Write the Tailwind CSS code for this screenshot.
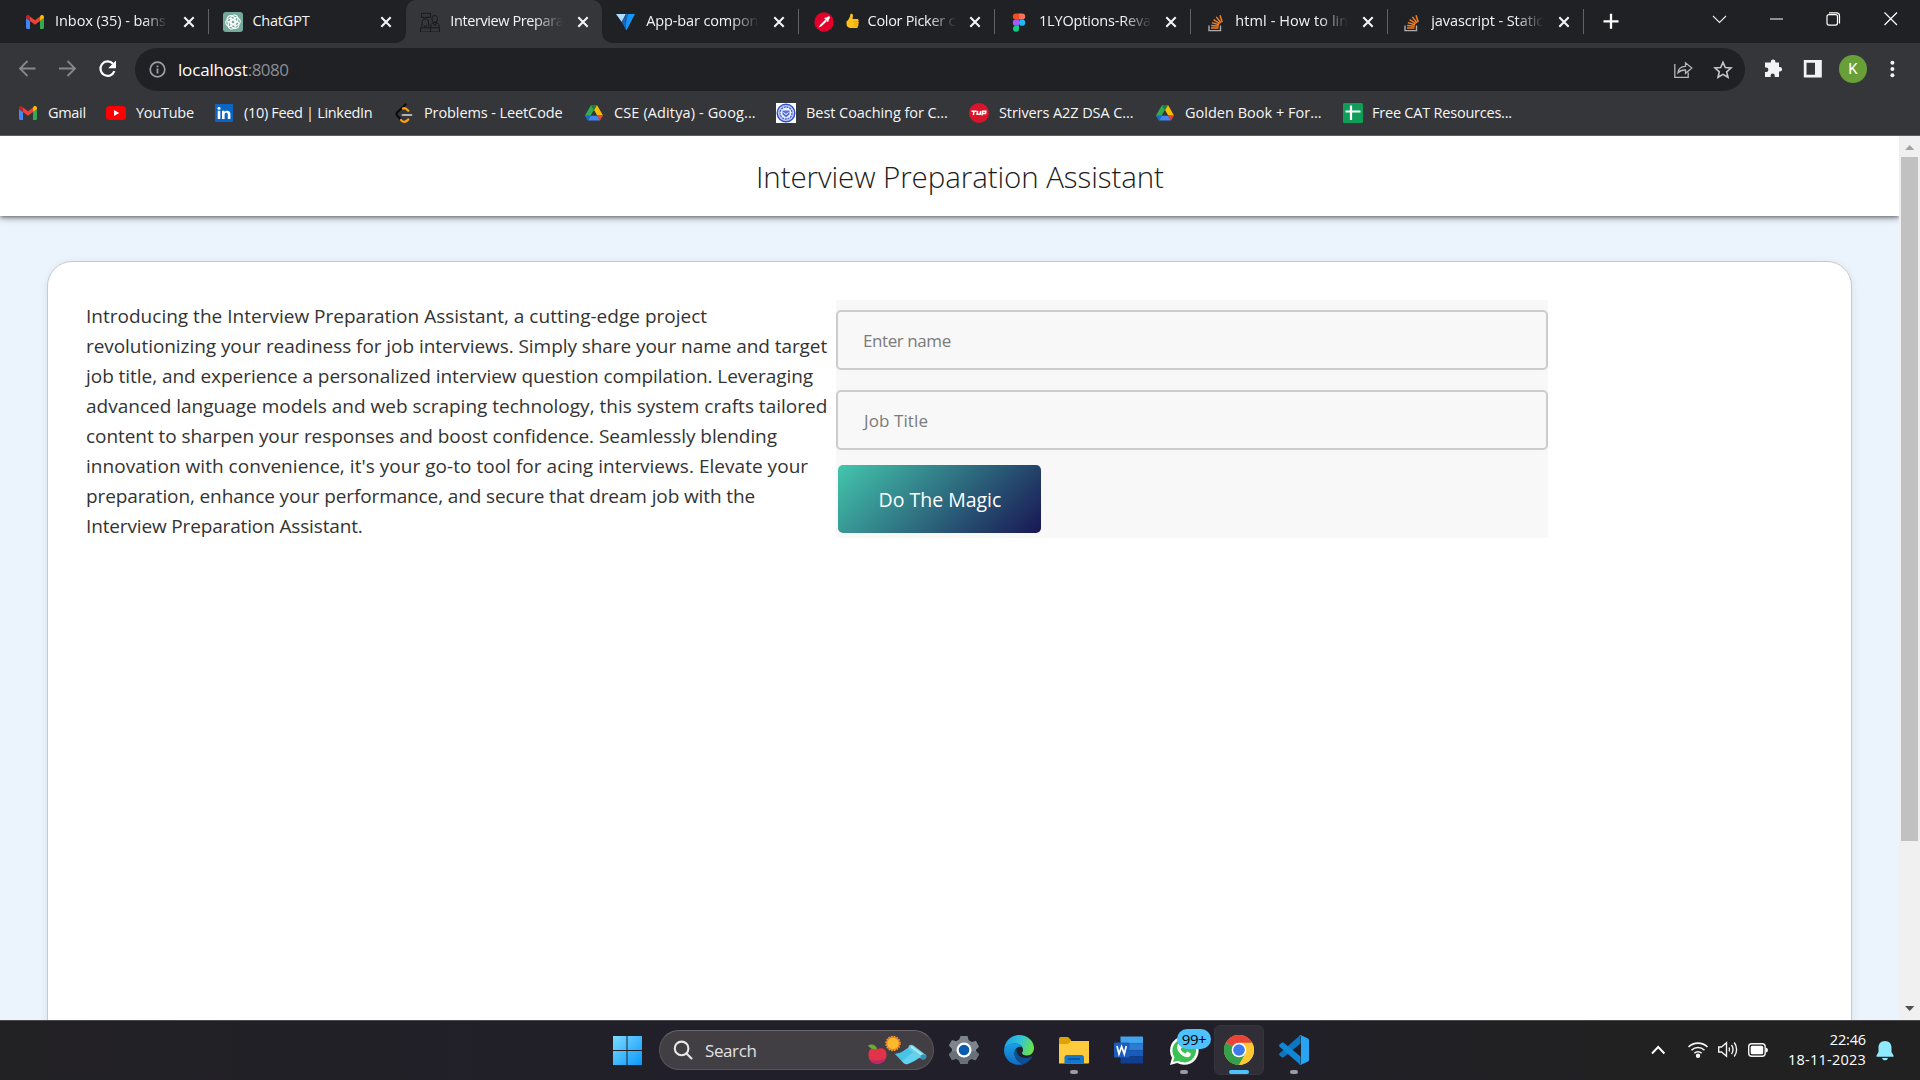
<!DOCTYPE html>
<html lang="en">
<head>
<meta charset="utf-8">
<title>Interview Preparation Assistant</title>
<script src="https://cdn.jsdelivr.net/npm/@tailwindcss/browser@4"></script>
</head>
<body class="w-[1920px] h-[1080px] overflow-hidden flex flex-col bg-white font-['Open_Sans','Noto_Sans',sans-serif]">
<svg class="hidden">
  <defs>
    <symbol id="close" viewBox="0 0 20 20"><path d="M5.300 5.300l9.400 9.400M14.700 5.300l-9.400 9.400" stroke="#f1f3f4" stroke-width="2.100" fill="none"/></symbol>
    <symbol id="gmail" viewBox="0 0 20 20"><path d="M1 6v9.500c0 .8.6 1.500 1.400 1.500H5V9z" fill="#4285f4"/><path d="M15 17h2.600c.8 0 1.400-.7 1.400-1.500V6l-4 3z" fill="#34a853"/><path d="M15 4.500V9l4-3V5c0-1.800-2-2.700-3.300-1.600z" fill="#fbbc04"/><path d="M5 9V4.500L10 8.300l5-3.800V9l-5 3.800z" fill="#ea4335"/><path d="M1 5v1l4 3V4.500l-.7-.9C3 2.500 1 3.300 1 5z" fill="#c5221f"/></symbol>
    <symbol id="drive" viewBox="0 0 20 20"><path d="M7 2h6l-3 5.200z" fill="#188038"/><path d="M7 2L1 12.500l3 5 6-10.300z" fill="#34a853"/><path d="M13 2l6 10.500h-6L10 7.200z" fill="#fbbc04"/><path d="M7 12.500h6L16 17.500H4z" fill="#4285f4"/><path d="M13 12.500h6l-3 5z" fill="#ea4335"/><path d="M7 12.500H1l3 5z" fill="#1967d2"/><path d="M10 7.200l3.100 5.300H6.900z" fill="#35363a"/></symbol>
    <symbol id="stack" viewBox="0 0 20 20"><path d="M4 13.500v5.100h11.500v-5.100" fill="none" stroke="#a9adb0" stroke-width="1.400"/><path d="M6 16h7.500M6.200 13.400l7.400.8M6.900 10.600l7.100 2.100M8.600 7.600l6.300 4M11.300 4.900l4.700 5.900M15 3.200l2.200 6.800" stroke="#f48024" stroke-width="1.500" fill="none"/></symbol>
  </defs>
</svg>

<!-- Tab strip -->
<header class="h-[43px] shrink-0 bg-[#202124] flex text-[14.500px] text-[#f1f3f4] pl-[13px]">
  <div class="w-[196.400px] flex items-center pl-3 shrink-0">
    <svg class="size-5 shrink-0"><use href="#gmail"/></svg>
    <div class="w-[114px] ml-[10px] -mt-0.5 overflow-hidden whitespace-nowrap mask-[linear-gradient(to_right,black_78%,transparent_99%)]"><span class="tracking-[-0.06px]">Inbox (35) - bans</span></div>
    <svg class="size-5 ml-[10px] shrink-0"><use href="#close"/></svg>
    <i class="w-px h-[25px] bg-[#5f6368] ml-auto"></i>
  </div>
  <div class="w-[196.400px] flex items-center pl-[13.500px] shrink-0">
    <svg class="size-5 shrink-0" viewBox="0 0 20 20"><rect width="20" height="20" rx="3" fill="#74aa9c"/><g fill="none" stroke="#fff" stroke-width="1.100"><path id="petal" d="M10 3.200c2.500-.9 4.800.8 4.800 3.200v3.300l-4.700 2.700-2.400-1.400V5.800c0-1.200 1-2.200 2.300-2.600z"/><use href="#petal" transform="rotate(60 10 10)"/><use href="#petal" transform="rotate(120 10 10)"/><use href="#petal" transform="rotate(180 10 10)"/><use href="#petal" transform="rotate(240 10 10)"/><use href="#petal" transform="rotate(300 10 10)"/></g></svg>
    <div class="w-[114px] ml-[9.500px] -mt-0.5 overflow-hidden whitespace-nowrap"><span class="tracking-[-0.200px]">ChatGPT</span></div>
    <svg class="size-5 ml-[9.500px] shrink-0"><use href="#close"/></svg>
  </div>
  <div class="w-[196.400px] flex items-center pl-[14.500px] shrink-0 bg-[#35363a] rounded-t-[10px] relative">
    <svg class="absolute -left-[10px] bottom-0 size-[10px]" viewBox="0 0 10 10"><path d="M10 0v10H0A10 10 0 0 0 10 0" fill="#35363a"/></svg>
    <svg class="absolute -right-[10px] bottom-0 size-[10px]" viewBox="0 0 10 10"><path d="M0 0v10h10A10 10 0 0 1 0 0" fill="#35363a"/></svg>
    <svg class="size-5 shrink-0" viewBox="0 0 20 20" fill="none" stroke="#17181a" stroke-width="1"><path d="M1.500 1.300h9v4H5.500L4 6.500 3.500 5.300h-2zM.5 20v-4.200h19V20zM10.500 15.800V20M2 15.500c-1-1 .2-3.500.2-5.500 0-2 1.300-3.200 3-3.200s3.200 1.200 3.200 3.200.9 4.500 0 5.500M12 6.800c0-2 1-3.300 2.800-3.300s2.700 1.300 2.700 3.300-1 3.200-2.700 3.200-2.800-1.200-2.800-3.200zM11 15.500v-3c1-1.500 2.300-2 3.800-2s3.200.5 4.200 2v3M13 11l1.800 3 1.700-3M3.500 13l1.700 2L7 13"/></svg>
    <div class="w-[114px] ml-[10px] -mt-0.5 overflow-hidden whitespace-nowrap mask-[linear-gradient(to_right,black_74%,transparent_99%)]"><span class="tracking-[-0.400px]">Interview Prepara</span></div>
    <svg class="size-5 ml-[8.500px] shrink-0"><use href="#close"/></svg>
  </div>
  <div class="w-[196.400px] flex items-center pl-[14px] shrink-0">
    <svg class="size-5 shrink-0" viewBox="0 0 20 20"><path d="M0 2h9.800L5.700 10z" fill="#aeddff"/><path d="M5.700 10L9.800 3v14.700z" fill="#1867c0"/><path d="M10.500 2H19l-8.200 15.700H9.800V12z" fill="#1697f6"/><path d="M10.500 2h1.700L9.800 13V3z" fill="#1867c0"/></svg>
    <div class="w-[114px] ml-[10px] -mt-0.5 overflow-hidden whitespace-nowrap mask-[linear-gradient(to_right,black_74%,transparent_99%)]"><span class="tracking-[-0.120px]">App-bar compon</span></div>
    <svg class="size-5 ml-[8.500px] shrink-0"><use href="#close"/></svg>
    <i class="w-px h-[25px] bg-[#5f6368] ml-auto"></i>
  </div>
  <div class="w-[196.400px] flex items-center pl-[15px] shrink-0">
    <svg class="size-5 shrink-0" viewBox="0 0 20 20"><g transform="translate(0 .3)"><circle cx="10" cy="9.700" r="9.700" fill="#e4002b"/><path d="M12 5.500l2.300-1.400c1.300-.4 2 .6 1.500 1.700L14.500 8l.3.900-1 .7-3.500-3.400.8-.9z" fill="#fff"/><path d="M11.200 7.400l1.600 1.600-5.300 5-2.800 1.300 1.300-2.700z" fill="#fff"/></g></svg>
    <div class="w-[114px] ml-[12px] -mt-0.5 overflow-hidden whitespace-nowrap flex items-center mask-[linear-gradient(to_right,black_72%,transparent_97%)]">
      <svg class="w-[13px] h-4 mr-[9px] shrink-0" viewBox="0 0 13 16"><path d="M.5 8.500C2.500 7 4 4.500 4.300 1.500 4.500 0 7 .5 7 2.500L6.600 6H11c2 0 2 2 1 2.500 1.200.5 1 2 0 2.400.9.600.6 1.900-.3 2.200.5 1-.2 2-1.200 2H5C2.500 15 .5 13.500.5 11z" fill="#fcc21b"/><path d="M7.500 8.500H12M7.500 10.900H12M7.500 13.100h4" stroke="#e59600" stroke-width=".7"/></svg>
      <span class="tracking-[-0.300px]">Color Picker c</span></div>
    <svg class="size-5 ml-[5px] shrink-0"><use href="#close"/></svg>
    <i class="w-px h-[25px] bg-[#5f6368] ml-auto"></i>
  </div>
  <div class="w-[196.400px] flex items-center pl-[14px] shrink-0">
    <svg class="size-5 shrink-0" viewBox="0 0 20 20"><g transform="translate(0 .6)"><path d="M10 .8H6.900a3.100 3.100 0 0 0 0 6.200H10z" fill="#f24e1e"/><path d="M10 .8h3.100a3.100 3.100 0 0 1 0 6.200H10z" fill="#ff7262"/><path d="M10 7H6.900a3.100 3.100 0 0 0 0 6.200H10z" fill="#a259ff"/><circle cx="13.100" cy="10.100" r="3.100" fill="#1abcfe"/><path d="M10 13.200H6.900a3 3 0 1 0 3.100 2.600z" fill="#0acf83"/></g></svg>
    <div class="w-[114px] ml-[10px] -mt-0.5 overflow-hidden whitespace-nowrap mask-[linear-gradient(to_right,black_74%,transparent_99%)]"><span class="tracking-[-0.170px]">1LYOptions-Reva</span></div>
    <svg class="size-5 ml-[8px] shrink-0"><use href="#close"/></svg>
    <i class="w-px h-[25px] bg-[#5f6368] ml-auto"></i>
  </div>
  <div class="w-[196.400px] flex items-center pl-[14px] shrink-0">
    <svg class="size-5 shrink-0"><use href="#stack"/></svg>
    <div class="w-[114px] ml-[10px] -mt-0.5 overflow-hidden whitespace-nowrap mask-[linear-gradient(to_right,black_74%,transparent_99%)]"><span class="tracking-[0.080px]">html - How to lin</span></div>
    <svg class="size-5 ml-[8.500px] shrink-0"><use href="#close"/></svg>
    <i class="w-px h-[25px] bg-[#5f6368] ml-auto"></i>
  </div>
  <div class="w-[196.400px] flex items-center pl-[13.500px] shrink-0">
    <svg class="size-5 shrink-0"><use href="#stack"/></svg>
    <div class="w-[114px] ml-[10px] -mt-0.5 overflow-hidden whitespace-nowrap mask-[linear-gradient(to_right,black_74%,transparent_99%)]"><span class="tracking-[-0.090px]">javascript - Static</span></div>
    <svg class="size-5 ml-[8.500px] shrink-0"><use href="#close"/></svg>
    <i class="w-px h-[25px] bg-[#5f6368] ml-auto"></i>
  </div>
  <svg class="size-5 ml-[17px] mt-[11px]" viewBox="0 0 20 20" stroke="#fff" stroke-width="2.300"><path d="M2.500 10.300h15M10 2.800v15"/></svg>
  <div class="ml-auto mr-px flex h-[37px] items-center">
    <svg class="w-[57px] h-5" viewBox="0 0 57 20" fill="none" stroke="#e8eaed" stroke-width="1.100"><path d="M22 7l6.500 6.500L35 7"/></svg>
    <svg class="w-[57px] h-5" viewBox="0 0 57 20" stroke="#fff" stroke-width="1"><path d="M22 10h13"/></svg>
    <svg class="w-[57px] h-5" viewBox="0 0 57 20" fill="none" stroke="#fff" stroke-width="1.200"><rect x="22" y="5.600" width="10.500" height="10.500" rx="2"/><path d="M24 3.900h7.500a3 3 0 0 1 3 3v7.500"/></svg>
    <svg class="w-[57px] h-5" viewBox="0 0 57 20" stroke="#fff" stroke-width="1.200"><path d="M22.500 3.500l12.500 12.500M35 3.500L22.500 16"/></svg>
  </div>
</header>

<!-- Toolbar -->
<div class="h-12 pt-[5px] shrink-0 bg-[#35363a] flex items-start">
  <div class="flex items-center h-[42px] w-[135px] pl-[17px] gap-5">
    <svg class="size-5" viewBox="0 0 20 20" fill="none" stroke="#86888a" stroke-width="1.800"><path d="M18.500 9.500H3M10.500 2L3 9.500l7.500 7.500"/></svg>
    <svg class="size-5" viewBox="0 0 20 20" fill="none" stroke="#86888a" stroke-width="1.800"><path d="M2 9.500h15.500M10.500 2l7.500 7.500-7.500 7.500"/></svg>
    <svg class="size-5" viewBox="0 0 20 20"><path d="M16 4.800A7.200 7.200 0 1 0 17.400 12.200" fill="none" stroke="#fff" stroke-width="2.200"/><path d="M19 1.500v7.800h-7.800z" fill="#fff"/></svg>
  </div>
  <div class="h-[43px] w-[1610px] rounded-full bg-[#202124] flex items-center pl-[14px] pr-[12px]">
    <svg class="size-[17px]" viewBox="0 0 17 17"><circle cx="8.500" cy="8.500" r="7.300" fill="none" stroke="#9aa0a6" stroke-width="1.700"/><path d="M7.600 7.500h1.800v5H7.600zM7.600 4.400h1.800v1.800H7.600z" fill="#9aa0a6"/></svg>
    <div class="ml-[12px] text-[17px] leading-[22px] whitespace-nowrap text-[#8b8f93]"><span class="text-white tracking-[-0.170px]">localhost</span><span class="tracking-[-0.500px]">:8080</span></div>
    <svg class="size-5 ml-auto" viewBox="0 0 20 20" fill="none" stroke="#b5b8bb" stroke-width="1.300"><path d="M1.800 4v13.300h13.400v-4.800M5 12.800c.3-4.500 3-6.300 7.500-6.500V2.800l6.300 5.300-6.300 5.200V10c-3.500-.2-5.700.6-7.500 2.800z"/></svg>
    <svg class="size-5 ml-[20px]" viewBox="0 0 20 20" fill="none" stroke="#c4c7ca" stroke-width="1.600"><path d="M10 2.300l2.300 5.200 5.700.5-4.300 3.800 1.300 5.500-5-2.900-5 2.900 1.300-5.500L2 8l5.700-.5z"/></svg>
  </div>
  <div class="flex items-center h-[42px]">
    <svg class="size-5 ml-[18px]" viewBox="0 0 20 20" fill="#f1f3f4"><path d="M4 3.500h3.800V2.700a2.300 2.300 0 0 1 4.600 0v.8H16V8h.800a2.300 2.300 0 0 1 0 4.600H16V18h-4.200v-1.300a2.100 2.100 0 0 0-4.200 0V18H2v-5h1.200a2.200 2.200 0 0 0 0-4.400H2V3.500z"/></svg>
    <svg class="size-5 ml-5" viewBox="0 0 20 20"><path d="M.8 1h18v17.500H.8zM3.500 3.700v12H12v-12z" fill="#f1f3f4" fill-rule="evenodd"/></svg>
    <div class="size-7 rounded-full bg-[#689f38] ml-[16px] flex items-center justify-center text-white text-[15px] font-['Roboto',sans-serif]">K</div>
    <svg class="size-5 ml-[15px]" viewBox="0 0 20 20" fill="#f1f3f4"><circle cx="10.400" cy="3.800" r="2"/><circle cx="10.400" cy="10" r="2"/><circle cx="10.400" cy="16.200" r="2"/></svg>
  </div>
</div>

<!-- Bookmarks bar -->
<nav class="h-[45px] shrink-0 bg-[#35363a] border-b border-[#5b5b60] flex items-center pl-[18px] text-[14.500px] text-[#f4f5f6] whitespace-nowrap">
  <div class="w-[88px] flex items-center gap-[10px]"><svg class="size-5"><use href="#gmail"/></svg><span class="tracking-[-0.300px]">Gmail</span></div>
  <div class="w-[108px] flex items-center gap-[10px]"><svg class="size-5" viewBox="0 0 20 20"><rect y="3" width="20" height="14" rx="3.500" fill="#f00"/><path d="M8 7l5.300 3L8 13z" fill="#fff"/></svg><span class="tracking-[-0.250px]">YouTube</span></div>
  <div class="w-[180px] flex items-center gap-[10px]"><svg class="size-5" viewBox="0 0 20 20"><rect x="1" y="1" width="18" height="18" fill="#0a66c2"/><path d="M3.700 7.800h2.600v8.300H3.700zM8 7.800h2.500V9c1.200-2 5.900-2 5.900 2v5.100h-2.600v-4.500c0-2.400-3.200-2.200-3.200 0v4.500H8z" fill="#fff"/><circle cx="5" cy="5.200" r="1.500" fill="#fff"/></svg><span class="tracking-[-0.320px]">(10) Feed | LinkedIn</span></div>
  <div class="w-[190px] flex items-center gap-[10px]"><svg class="size-5" viewBox="0 0 20 20" fill="none" stroke-width="2.200" stroke-linecap="round"><path d="M11.500 1.500L3.200 9.500c-1 1-1 2 0 3l3 3.500" stroke="#0b0b0b"/><path d="M9 5.500c1.500-.8 3-.3 5.300 2.200M7 17c1.500 2.500 5 2.500 7.300-.5" stroke="#ffa116"/><path d="M8.500 12h9" stroke="#b3b3b3" stroke-width="1.800"/></svg><span class="tracking-[-0.100px]">Problems - LeetCode</span></div>
  <div class="w-[192px] flex items-center gap-[10px]"><svg class="size-5"><use href="#drive"/></svg><span class="tracking-[0.120px]">CSE (Aditya) - Goog...</span></div>
  <div class="w-[193px] flex items-center gap-[10px]"><svg class="size-5" viewBox="0 0 20 20"><path d="M0 0h20v20H0z" fill="#fff"/><circle cx="10" cy="10" r="8.800" fill="#c9d2f5" stroke="#2f4fd0" stroke-width="1.400"/><circle cx="10" cy="10" r="6" fill="#eef1ff" stroke="#3d5bd6" stroke-width="1.300" stroke-dasharray="2 .8"/><path d="M6.500 7.500h7v4L10 14.500l-3.500-3z" fill="#5570dc"/><path d="M7.500 9.500L10 11.500l2.500-2" stroke="#fff" fill="none"/></svg><span class="tracking-[-0.060px]">Best Coaching for C...</span></div>
  <div class="w-[186px] flex items-center gap-[10px]"><svg class="size-5" viewBox="0 0 20 20"><circle cx="10" cy="10" r="10" fill="#d9142b"/><path d="M2.500 8.200h5M5 8.200l-.6 4M8.600 7.800l-.5 3.400h3l.6-3.400M13 12.400l.6-4.200h3.200l-.3 2.200h-3" fill="none" stroke="#fff" stroke-width="1.500"/></svg><span class="tracking-[-0.080px]">Strivers A2Z DSA C...</span></div>
  <div class="w-[188px] flex items-center gap-[10px]"><svg class="size-5"><use href="#drive"/></svg><span class="tracking-[0.010px]">Golden Book + For...</span></div>
  <div class="flex items-center gap-[9px]"><svg class="size-5" viewBox="0 0 20 20"><rect width="20" height="20" rx="1.500" fill="#0f9d58"/><path d="M8 2.500V17M2.500 8.500H17.500" stroke="#fff" stroke-width="2.200"/></svg><span class="tracking-[-0.220px]">Free CAT Resources...</span></div>
</nav>

<!-- Page -->
<div class="h-[884px] shrink-0 flex overflow-hidden">
  <main class="w-[1899px] bg-[#ebf3fc] overflow-hidden">
    <div class="relative z-10 h-20 bg-white shadow-[0_2px_4px_-1px_rgba(0,0,0,.2),0_4px_5px_0_rgba(0,0,0,.14),0_1px_10px_0_rgba(0,0,0,.12),0_1px_3px_rgba(30,20,50,.3)] flex pt-[20px] pl-[756px]">
      <h1 class="text-[29.500px] leading-[42px] font-[350] tracking-[-0.080px] text-[#1c1c1c] whitespace-nowrap">Interview Preparation Assistant</h1>
    </div>
    <section class="mt-[45px] ml-[47px] w-[1805px] h-[900px] rounded-[25px] border border-[#c8c9cb] bg-white shadow-[0_2px_8px_rgba(0,0,0,.08)] flex pt-[38px] pl-[38px]">
      <p class="w-[750px] text-[19px] leading-[30px] text-[#333] whitespace-nowrap pt-[1px]">
        <span class="tracking-[0.010px]">Introducing the Interview Preparation Assistant, a cutting-edge project</span><br>
        <span class="tracking-[-0.060px]">revolutionizing your readiness for job interviews. Simply share your name and target</span><br>
        <span class="tracking-[-0.050px]">job title, and experience a personalized interview question compilation. Leveraging</span><br>
        <span class="tracking-[0px]">advanced language models and web scraping technology, this system crafts tailored</span><br>
        <span class="tracking-[-0.060px]">content to sharpen your responses and boost confidence. Seamlessly blending</span><br>
        <span class="tracking-[0.035px]">innovation with convenience, it's your go-to tool for acing interviews. Elevate your</span><br>
        <span class="tracking-[-0.117px]">preparation, enhance your performance, and secure that dream job with the</span><br>
        <span class="tracking-[-0.150px]">Interview Preparation Assistant.</span>
      </p>
      <form class="w-[712px] h-[238px] bg-[#f8f8f8] pt-[10px] text-[17px] text-[#7b7b7b] whitespace-nowrap">
        <div class="h-[60px] border-2 border-[#ccc] rounded-[5px] flex items-center pl-[25px] pt-px"><span class="tracking-[-0.420px]">Enter name</span></div>
        <div class="h-[60px] mt-5 border-2 border-[#ccc] rounded-[5px] flex items-center pl-[26px] pt-px"><span class="tracking-[0.100px]">Job Title</span></div>
        <div class="mt-[15px] ml-[2px] w-[203px] h-[68px] rounded-[5px] bg-[linear-gradient(135deg,#43c6ac,#191654)] text-white text-[19.500px] flex items-center pl-[40.500px] pt-[2px]"><span>Do The Magic</span></div>
      </form>
    </section>
  </main>
  <aside class="w-[21px] bg-[#f0f0f0] flex flex-col items-center">
    <svg class="w-[21px] h-[21px] shrink-0" viewBox="0 0 21 21"><path d="M6 14l4.700-5 4.700 5z" fill="#a3a3a3"/></svg>
    <div class="w-[17px] h-[684px] bg-[#c1c1c1]"></div>
    <svg class="w-[21px] h-[21px] mt-auto mb-px" viewBox="0 0 21 21"><path d="M6 8l4.700 5 4.700-5z" fill="#505050"/></svg>
  </aside>
</div>

<!-- Taskbar -->
<footer class="h-[60px] shrink-0 border-t border-[#4a4a4d] bg-[linear-gradient(to_right,#222124,#211f29_35%,#211f2a_60%,#212121_85%)] flex items-start text-white">
  <svg class="size-[30px] mt-[14px] ml-[612px]" viewBox="0 0 30 30"><defs><linearGradient id="win" gradientUnits="userSpaceOnUse" x1="0" y1="0" x2="30" y2="30"><stop stop-color="#7fdcff"/><stop offset="1" stop-color="#0a98fb"/></linearGradient></defs><path d="M1 1h13.500v14H1zM15.500 1H30v14H15.500zM1 16h13.500v14H1zM15.500 16H30v14H15.500z" fill="url(#win)"/></svg>
  <div class="ml-[17px] mt-[9px] w-[275px] h-10 rounded-full bg-[#413f44] border border-[#57555a] border-t-[#6a686d] flex items-center pl-[13px]">
    <svg class="size-[20px]" viewBox="0 0 20 20" fill="none" stroke="#e8e8e8" stroke-width="2.100" stroke-linecap="round"><circle cx="8.600" cy="8.400" r="6.800"/><path d="M13.500 13.500l5 5"/></svg>
    <span class="ml-[12px] mt-px text-[17px] text-[#e2e2e4] tracking-[-0.400px]">Search</span>
    <svg class="ml-auto mr-[6px] w-[60px] h-[32px]" viewBox="0 0 60 32"><circle cx="26" cy="9.500" r="6.900" fill="#f0791a"/><circle cx="26" cy="9.500" r="7" fill="none" stroke="#f79a28" stroke-width="1.500" stroke-dasharray="1.500 1.300"/><circle cx="26" cy="9.500" r="5.800" fill="#fdb92c"/><path d="M1.500 21c0-7 5-8 9-6 5-2 9 .5 9 5.500 0 6-4 9.500-9 9.200-5 .3-9-2.700-9-8.700z" fill="#e2334b"/><path d="M2.500 25c3 2.500 12 2.500 16-1-1 4-4 6-8 5.700-4 .3-7-1.700-8-4.700z" fill="#b8286f"/><path d="M1 11.500c4-2.200 8-.5 9 3.500-4 .8-7-.5-9-3.500z" fill="#6cae2c"/><path d="M28 20c4 0 9-3 13-6l13 9c-5 3-8 5-13 7-3 1-5-1-7-4-2-2-4-5-6-6z" fill="#62d2f0"/><path d="M28 20c4 0 9-3 13-6l5 4-11 9z" fill="#48c3e6"/><path d="M41.500 14.500c-1-3 2.500-5 5-3L59 21c1.500 2-1 5.500-4.500 4z" fill="#6fcde4"/><path d="M44 12.500l12 9" stroke="#a8edfa" stroke-width="2"/><circle cx="56.300" cy="23" r="2.800" fill="#3391b8"/></svg>
  </div>
  <svg class="size-[32px] mt-[13px] ml-[14px]" viewBox="0 0 32 32"><path d="M12.500 2h7l1.200 4.200 3.200 1.800 4.100-1.200 3 6-3 3 0 1.500 3 3.200-3.300 5.700-4.300-1.300-2.900 1.700L19.400 30h-7l-1.200-3.500-3-1.700L4 26 .8 20.400 3.900 17.200v-2.500L.8 11.500 4 6l4.200 1.200 3-1.700z" fill="#7c848c"/><path d="M4 26L.8 20.400 3.900 17.200h24.200l3 3L27.700 26l-4.300-1.300-2.900 1.700L19.400 30h-7l-1.200-3.500-3-1.700z" fill="#68717a"/><circle cx="16" cy="16" r="7.500" fill="#fff"/><circle cx="16" cy="16" r="5.300" fill="#0b5cad"/></svg>
  <svg class="size-[30px] mt-[14px] ml-[24px]" viewBox="0 0 30 30"><defs><linearGradient id="e1" x1="0" y1=".2" x2="1" y2=".5"><stop stop-color="#1fa0e0"/><stop offset=".5" stop-color="#2fc4dd"/><stop offset="1" stop-color="#6be24a"/></linearGradient><linearGradient id="e2" x1="0" y1="0" x2="0" y2="1"><stop stop-color="#1a9fe6"/><stop offset="1" stop-color="#0f6cc0"/></linearGradient></defs><path d="M.4 13C1.500 5.500 7.500 0 15 0c8.500 0 15 6 15 13 0 4.500-3 7.500-7 7.500-3.500 0-5.300-1.500-5-2.700.8-1 1.200-2 1-3.500C18.500 10.500 15 8.500 11 8.500c-4.500 0-8.500 2-10.600 4.500z" fill="url(#e1)"/><path d="M.4 13c2-3 6-5 10.600-4.800C14.500 8.500 17 10 18 12c-4-1-7.500 1.500-7.500 6 0 5 3.500 9.500 9 11.200C10 32 0 25.500 0 15z" fill="url(#e2)"/><path d="M10.500 18c0-2 .8-3.600 2.300-4.600-1 4.500 2.500 9.600 8.700 9.600 2.300 0 4.500-.7 6-1.500.7-.3 1 .2.600.8-2 3.200-5 5.900-8.600 6.900-5.500-1.700-9-6.200-9-11.200z" fill="#0c4f94"/></svg>
  <div class="w-[30px] h-[50px] ml-[25px] mt-[14px] flex flex-col items-center">
    <svg class="size-[30px]" viewBox="0 0 30 30"><path d="M0 4c0-1 .5-2 1.500-2H9l3 3v6H0z" fill="#e0a106"/><path d="M0 9h9l3-3h18v21.500c0 .6-.4 1-1 1H0z" fill="#fdcb3c"/><path d="M5.500 28.500v-6c0-1.500 1-2.500 2.500-2.500h14.500c1.500 0 2.500 1 2.500 2.500v6z" fill="#1478cf"/><path d="M9 24h12" stroke="#0b4c92" stroke-width="1.500"/></svg>
    <i class="w-2 h-1 rounded-full bg-[#9b9a9f] mt-[5px]"></i>
  </div>
  <svg class="w-[30px] h-[30px] mt-[14px] ml-[24px]" viewBox="0 0 30 30"><path d="M7.500 1.500H29c.6 0 1 .4 1 1v6H7.500z" fill="#41a5ee"/><path d="M7.500 8.500H30v7H7.500z" fill="#2b7cd3"/><path d="M7.500 15.500H30v6H7.500z" fill="#185abd"/><path d="M7.500 21.500H30v6c0 .6-.4 1-1 1H7.500z" fill="#103f91"/><rect x="1" y="7.500" width="15.500" height="15" rx="1.300" fill="#1a5dbe"/><path d="M4 11l2 8 2.600-7.500L11.300 19l2-8" stroke="#fff" stroke-width="1.700" fill="none"/></svg>
  <div class="w-[32px] h-[50px] ml-[25px] mt-[14px] flex flex-col items-center relative">
    <svg class="size-[30px]" viewBox="0 0 30 30"><path d="M1 30l2-7.200A14.300 14.300 0 1 1 8.300 28z" fill="#fff"/><path d="M4 27l1.500-4.700a11.800 11.800 0 1 1 3.800 3.500z" fill="#3cc253"/><path d="M8.500 10c.8-1.800 2.500-2 3.200-.6l1.200 2.800-1.300 2c1 2 2.800 3.600 4.900 4.300l1.700-1.900 3.400 1.600c.9 3-2.700 4.500-4.700 3.900-4.400-1.200-8.900-6-8.900-9.500z" fill="#fff"/></svg>
    <i class="w-2 h-1 rounded-full bg-[#9b9a9f] mt-[5px]"></i>
    <div class="absolute left-[9px] -top-[6px] w-[34px] h-5 rounded-full bg-[#4cc2ff] text-black text-[15px] leading-[20px] text-center tracking-[-0.400px]">99+</div>
  </div>
  <div class="w-[50px] h-[50px] mt-[4px] ml-[14px] rounded-md bg-[#302e37] border border-[#36343c] flex flex-col items-center pt-[9px]">
    <svg class="size-[30px] shrink-0" viewBox="0 0 30 30"><circle cx="15" cy="15" r="15" fill="#fcc934"/><path d="M15 15L2 7.500A15 15 0 0 1 28 7.500z" fill="#ea4335"/><path d="M2 7.500A15 15 0 0 0 15 30l6.500-11.300L15 15z" fill="#34a04e"/><path d="M15 7.800h13.200A15 15 0 0 1 15 30l6.200-11.200z" fill="#fcc934"/><circle cx="15" cy="15" r="7.300" fill="#fff"/><circle cx="15" cy="15" r="5.800" fill="#3f79ee"/></svg>
    <i class="w-5 h-1 shrink-0 rounded-full bg-[#4cc2ff] mt-[5px]"></i>
  </div>
  <div class="w-[30px] h-[50px] ml-[15px] mt-[14px] flex flex-col items-center">
    <svg class="size-[30px]" viewBox="0 0 30 30"><path d="M21.500 0v8.500L5 22 3.500 22.800.6 20.500c-.8-.8-.6-1.700 0-2.300z" fill="#0a76c4"/><path d="M21.500 30v-8.500L5 8l-1.500-.8L.6 9.500c-.8.800-.6 1.700 0 2.300z" fill="#0f87d6"/><path d="M21.500 0L29 3.500c.6.300 1 .9 1 1.500v20c0 .7-.4 1.200-1 1.500L21.500 30c-.7.300-1.300 0-1.700-.4 1 .6 2.200 0 2.200-1.300V1.700c0-1.300-1.200-1.900-2.200-1.300.4-.4 1-.7 1.700-.4z" fill="#27a5f2"/></svg>
    <i class="w-2 h-1 rounded-full bg-[#9b9a9f] mt-[5px]"></i>
  </div>
  <div class="ml-auto flex items-start">
    <svg class="w-5 h-5 mt-[19px] mr-[19px]" viewBox="0 0 20 20" fill="none" stroke="#fff" stroke-width="1.900"><path d="M4 13.500L10.200 7l6.200 6.500"/></svg>
    <svg class="w-[22px] h-5 mt-[18px]" viewBox="0 0 22 20" fill="none" stroke="#f4f4f4" stroke-width="1.600"><path d="M1.500 8a13.500 13.500 0 0 1 19 0M4.500 11.200a9.300 9.300 0 0 1 13 0M7.300 14.200a5.300 5.300 0 0 1 7.400 0"/><circle cx="11" cy="16.800" r="1.400" fill="#fff"/></svg>
    <svg class="w-[22px] h-5 ml-[8px] mt-[18px]" viewBox="0 0 22 20" fill="none" stroke="#f4f4f4" stroke-width="1.400"><path d="M1.700 8v5h2.800l5 4.200V3.700L4.500 8zM12 8.500c.8 1.200.8 2.800 0 4M14.500 6c2 2.500 2 6.500 0 9M17.200 3.500c3.200 4 3.200 10 0 14"/></svg>
    <svg class="w-[22px] h-5 ml-[8px] mt-[19px]" viewBox="0 0 22 20"><rect x="1.700" y="3.700" width="16.500" height="12.500" rx="3" fill="none" stroke="#f4f4f4" stroke-width="1.400"/><rect x="3.700" y="5.700" width="12.500" height="8.500" rx="1.500" fill="#fff"/><path d="M19 7.700c2.500 0 2.500 4.600 0 4.600z" fill="#fff"/></svg>
    <div class="w-[79px] ml-[18px] mt-[9px] text-[14.500px] leading-5 text-right whitespace-nowrap"><span class="tracking-[-0.150px]">22:46</span><br><span class="tracking-[0.230px]">18-11-2023</span></div>
    <svg class="w-[18px] h-[22px] ml-[10px] mt-[19px] mr-[26px]" viewBox="0 0 18 22"><path d="M9 1c4 0 6.500 2.800 6.500 6.500V12l2 3.500v1.300H.5v-1.300l2-3.500V7.500C2.500 3.800 5 1 9 1zM6 18h6c-.5 1.500-1.500 2.300-3 2.300S6.500 19.500 6 18z" fill="#8fe9ff"/></svg>
  </div>
</footer>
</body>
</html>
